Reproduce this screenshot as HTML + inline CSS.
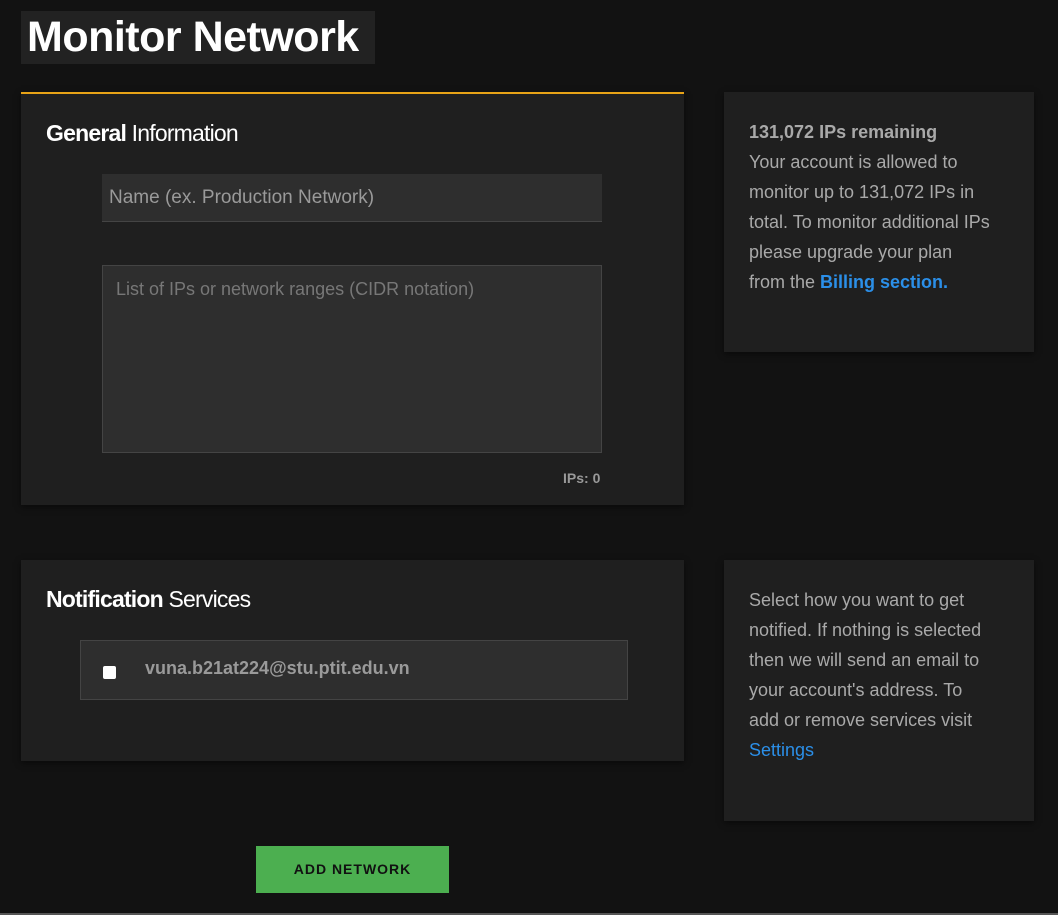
<!DOCTYPE html>
<html><head><style>
body{margin:0;width:1058px;height:915px;background:#121212;font-family:"Liberation Sans",sans-serif;position:relative;overflow:hidden;}
.abs{position:absolute;box-sizing:border-box}
.panel{background:#1f1f1f;box-shadow:0 2px 6px rgba(0,0,0,.5)}
h1{position:absolute;left:21px;top:11px;height:53px;margin:0;background:#222;color:#fff;font-size:43px;font-weight:bold;letter-spacing:-0.5px;padding:0 6px;line-height:53px;width:354px;box-sizing:border-box;white-space:nowrap}
.h2{color:#fff;font-size:23px;letter-spacing:-0.8px}
.side{color:#a9a9a9;font-size:18px;line-height:30px;white-space:nowrap}
a{color:#2b8fe8;text-decoration:none}
</style></head><body>
<h1>Monitor Network</h1>
<div class="abs panel" style="left:21px;top:92px;width:663px;height:413px;border-top:2px solid #e8a317"></div>
<div class="abs h2" style="left:46px;top:120px"><b>General</b> Information</div>
<div class="abs" style="left:102px;top:174px;width:500px;height:48px;background:#2e2e2e;border-bottom:1px solid #444;color:#9a9a9a;font-size:19px;line-height:47px;padding-left:7px">Name (ex. Production Network)</div>
<div class="abs" style="left:102px;top:265px;width:500px;height:188px;background:#2e2e2e;border:1px solid #444;color:#777;font-size:18px;padding:13px 0 0 13px">List of IPs or network ranges (CIDR notation)</div>
<div class="abs" style="left:563px;top:470px;color:#999;font-size:14px;font-weight:bold">IPs: 0</div>

<div class="abs panel" style="left:724px;top:92px;width:310px;height:260px"></div>
<div class="abs side" style="left:749px;top:117px"><b>131,072 IPs remaining</b><br>Your account is allowed to<br>monitor up to 131,072 IPs in<br>total. To monitor additional IPs<br>please upgrade your plan<br>from the <a><b>Billing section.</b></a></div>

<div class="abs panel" style="left:21px;top:560px;width:663px;height:201px"></div>
<div class="abs h2" style="left:46px;top:586px"><b>Notification</b> Services</div>
<div class="abs" style="left:80px;top:640px;width:548px;height:60px;background:#2e2e2e;border:1px solid #444"></div>
<div class="abs" style="left:103px;top:666px;width:13px;height:13px;background:#fff;border-radius:2px"></div>
<div class="abs" style="left:145px;top:658px;color:#9a9a9a;font-size:18px;font-weight:bold">vuna.b21at224@stu.ptit.edu.vn</div>

<div class="abs panel" style="left:724px;top:560px;width:310px;height:261px"></div>
<div class="abs side" style="left:749px;top:585px">Select how you want to get<br>notified. If nothing is selected<br>then we will send an email to<br>your account's address. To<br>add or remove services visit<br><a>Settings</a></div>

<div class="abs" style="left:256px;top:846px;width:193px;height:47px;background:#4caf50;color:#111;font-size:14px;letter-spacing:1px;text-align:center;line-height:47px;font-weight:bold">ADD NETWORK</div>
<div class="abs" style="left:0;top:913px;width:1058px;height:2px;background:#555"></div>
</body></html>
